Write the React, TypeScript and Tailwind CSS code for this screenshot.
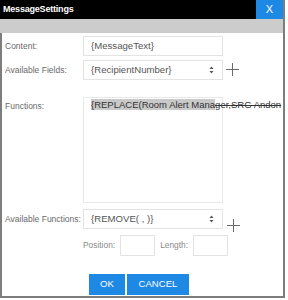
import React from "react";

const font = { fontFamily: '"Liberation Sans", Arial, sans-serif' };

function SelectArrows() {
  return (
    <svg width="5" height="8" viewBox="0 0 5 8" className="shrink-0">
      <path d="M2.5 0.5 L4.5 3 L0.5 3 Z" fill="#555" />
      <path d="M2.5 7.5 L4.5 5 L0.5 5 Z" fill="#555" />
    </svg>
  );
}

function Plus() {
  return (
    <svg width="13" height="13" viewBox="0 0 13 13" className="shrink-0">
      <path d="M0 6.5 H13 M6.5 0 V13" stroke="#6b6b6b" strokeWidth="1" />
    </svg>
  );
}

export default function App() {
  return (
    <div className="w-[288px] h-[300px] bg-white" style={font}>
      <div className="w-[285px] h-[298px] border-r-2 border-[#7d7d7d] flex flex-col">
        {/* Title bar */}
        <div className="h-[19px] bg-black flex items-center justify-between shrink-0">
          <span className="pl-[3px] text-white text-[9px] font-bold tracking-[-0.2px]">
            MessageSettings
          </span>
          <button className="w-[27px] h-[19px] bg-[#1e88e5] text-white text-[11px] flex items-center justify-center">
            X
          </button>
        </div>
        <div className="h-[14px] bg-[#cccccc] shrink-0" />

        {/* Body */}
        <div className="flex-1 border-l-2 border-b-2 border-[#7d7d7d] overflow-hidden pb-px">
          {/* Content */}
          <div className="flex items-center mt-[3px] h-[20px]">
            <span className="w-[81px] pl-[3px] text-[8.5px] text-[#6a6a6a]">Content:</span>
            <div className="w-[140px] h-[20px] border border-[#e3e3e3] flex items-center pl-[7px] text-[9.6px] text-[#555]">
              {"{MessageText}"}
            </div>
          </div>

          {/* Available Fields */}
          <div className="flex items-center mt-[4px] h-[20px]">
            <span className="w-[81px] pl-[3px] text-[8.5px] text-[#6a6a6a]">Available Fields:</span>
            <div className="w-[140px] h-[20px] border border-[#e3e3e3] flex items-center justify-between pl-[7px] pr-[8px] text-[9.6px] text-[#555]">
              <span>{"{RecipientNumber}"}</span>
              <SelectArrows />
            </div>
            <div className="ml-[3px] mt-[-1px]">
              <Plus />
            </div>
          </div>

          {/* Functions */}
          <div className="flex items-start mt-[17px]">
            <span className="w-[81px] pl-[3px] pt-[3px] text-[8.5px] text-[#6a6a6a]">Functions:</span>
            <div className="relative w-[140px] h-[106px] border border-[#e8e8e8]">
              <div className="absolute left-[7px] top-[1px] whitespace-nowrap text-[9.5px] leading-[11px] text-[#333]">
                <span className="bg-[#c9c9c9]">{"{REPLACE(Room Alert Mana"}</span>
                <span className="line-through">{"ger,SRG Andon"}</span>
              </div>
            </div>
          </div>

          {/* Available Functions */}
          <div className="flex items-center mt-[6px] h-[20px]">
            <span className="w-[81px] pl-[3px] text-[8.5px] text-[#6a6a6a]">Available Functions:</span>
            <div className="w-[140px] h-[20px] border border-[#e3e3e3] flex items-center justify-between pl-[7px] pr-[8px] text-[9.6px] text-[#555]">
              <span>{"{REMOVE( , )}"}</span>
              <SelectArrows />
            </div>
            <div className="ml-[4px] mt-[12px]">
              <Plus />
            </div>
          </div>

          {/* Position / Length */}
          <div className="flex items-center mt-[6px] h-[21px] pl-[81px]">
            <span className="text-[8.4px] text-[#8a8a8a]">Position:</span>
            <div className="ml-[5px] w-[35px] h-[21px] border border-[#e3e3e3]" />
            <span className="ml-[5px] text-[8.4px] text-[#8a8a8a]">Length:</span>
            <div className="ml-[5px] w-[35px] h-[21px] border border-[#e3e3e3]" />
          </div>

          {/* Buttons */}
          <div className="flex items-center gap-[2px] mt-[18px] h-[21px] pl-[87px]">
            <button className="w-[36px] h-[21px] bg-[#1e88e5] text-white text-[9.6px]">OK</button>
            <button className="w-[62px] h-[21px] bg-[#1e88e5] text-white text-[9.6px]">CANCEL</button>
          </div>
        </div>
      </div>
    </div>
  );
}
